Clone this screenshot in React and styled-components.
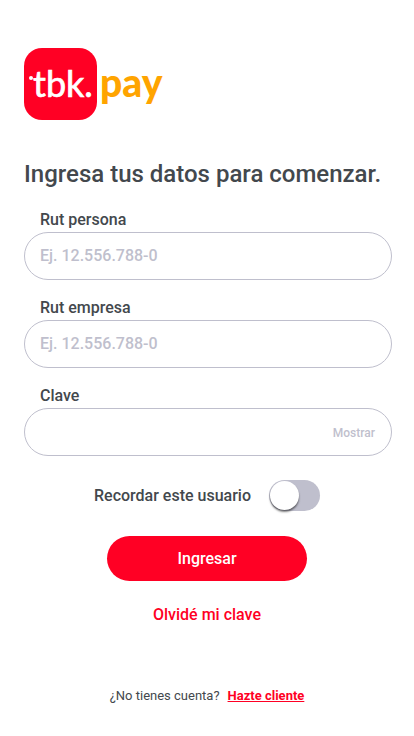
import React, { useState } from "react";
import styled, { createGlobalStyle } from "styled-components";

const App = () => {
	const [person, setPerson] = useState("");
	const [company, setCompany] = useState("");
	const [password, setPassword] = useState("");
	const [show, setShow] = useState(false);
	const [remember, setRemember] = useState(false);

	return (
		<>
			<GlobalStyle />
			<Container>
				<Logo />
				<Title>Ingresa tus datos para comenzar.</Title>
				<Form onSubmit={(e) => e.preventDefault()}>
					<Fields>
						<Field>
							<Label htmlFor='person'>Rut persona</Label>
							<InputBox>
								<Input
									id='person'
									placeholder='Ej. 12.556.788-0'
									value={person}
									onChange={(e) => setPerson(e.target.value)}
								/>
							</InputBox>
						</Field>
						<Field>
							<Label htmlFor='company'>Rut empresa</Label>
							<InputBox>
								<Input
									id='company'
									placeholder='Ej. 12.556.788-0'
									value={company}
									onChange={(e) => setCompany(e.target.value)}
								/>
							</InputBox>
						</Field>
						<Field>
							<Label htmlFor='password'>Clave</Label>
							<InputBox>
								<Input
									id='password'
									type={show ? "text" : "password"}
									value={password}
									onChange={(e) => setPassword(e.target.value)}
								/>
								<ShowButton type='button' onClick={() => setShow(!show)}>
									{show ? "Ocultar" : "Mostrar"}
								</ShowButton>
							</InputBox>
						</Field>
					</Fields>
					<Remember>
						<label htmlFor='remember'>Recordar este usuario</label>
						<Toggle
							id='remember'
							type='checkbox'
							checked={remember}
							onChange={(e) => setRemember(e.target.checked)}
						/>
					</Remember>
					<Submit type='submit'>Ingresar</Submit>
					<Forgot href='#clave'>Olvidé mi clave</Forgot>
				</Form>
				<Footer>
					<span>¿No tienes cuenta?</span>
					<SignUp href='#registro'>Hazte cliente</SignUp>
				</Footer>
			</Container>
		</>
	);
};

const Logo = () => (
	<LogoSvg viewBox='0 0 140 72' role='img' aria-label='tbk. pay'>
		<rect width='73' height='72' rx='18' fill='#ff0024' />
		<circle cx='7' cy='30' r='2' fill='#fff' />
		<LogoText
			x='9'
			y='49'
			fontSize='36'
			fontWeight='400'
			fill='#fff'
			stroke='#fff'
			strokeWidth='0.7'>
			tbk.
		</LogoText>
		<LogoText x='76' y='49' fontSize='39' fontWeight='900' fill='#ffa400'>
			pay
		</LogoText>
	</LogoSvg>
);

export default App;

const GlobalStyle = createGlobalStyle`
	* {
		box-sizing: border-box;
	}

	body {
		margin: 0;
		background-color: #fff;
		color: #43484d;
		font-family: Roboto, sans-serif;
		font-size: 16px;
		font-weight: 500;
		line-height: 24px;
	}

	input,
	button {
		font-family: inherit;
		font-weight: inherit;
	}
`;

const Container = styled.main`
	padding: 48px 0 24px;
	display: flex;
	flex-direction: column;
`;

const LogoSvg = styled.svg`
	width: 140px;
	height: 72px;
	margin-left: 24px;
	display: block;
`;

const LogoText = styled.text`
	font-family: Lato, sans-serif;
`;

const Title = styled.h1`
	margin: 40px 0 20px;
	padding: 0 22px 0 24px;
	font-size: 24px;
	font-weight: 500;
	line-height: 28px;
`;

const Form = styled.form`
	display: flex;
	flex-direction: column;
	align-items: center;
`;

const Fields = styled.div`
	width: 100%;
	padding: 0 22px 0 24px;
	display: flex;
	flex-direction: column;
	gap: 16px;
`;

const Field = styled.div`
	display: flex;
	flex-direction: column;
`;

const Label = styled.label`
	padding-left: 16px;
`;

const InputBox = styled.div`
	height: 48px;
	padding: 0 16px 0 15px;
	display: flex;
	align-items: center;
	border: 1px solid #bfbfcd;
	border-radius: 24px;

	&:focus-within {
		border-color: #43484d;
	}
`;

const Input = styled.input`
	flex: 1;
	min-width: 0;
	padding: 0 0 2px;
	border: 0;
	outline: none;
	background: none;
	color: inherit;
	font-size: 16px;

	&::placeholder {
		color: #bfbfcd;
		opacity: 1;
	}
`;

const ShowButton = styled.button`
	padding: 2px 0 0;
	border: 0;
	background: none;
	color: #bfbfcd;
	font-size: 12px;
	line-height: 16px;
	cursor: pointer;
`;

const Remember = styled.div`
	margin: 24px 0 25px;
	display: flex;
	align-items: center;
	gap: 18px;
	line-height: 22px;
`;

const Toggle = styled.input`
	appearance: none;
	width: 51px;
	height: 31px;
	margin: 0;
	padding: 1px;
	display: flex;
	border-radius: 16px;
	background-color: #bfbfcd;
	cursor: pointer;

	&::before {
		content: "";
		width: 29px;
		height: 29px;
		border-radius: 50%;
		background-color: #fff;
		box-shadow: 0 2px 2px rgba(0, 0, 0, 0.5);
		transition: transform 250ms;
	}

	&:checked {
		background-color: #ff0024;
	}

	&:checked::before {
		transform: translateX(20px);
	}
`;

const Submit = styled.button`
	width: 200px;
	height: 45px;
	border: 0;
	border-radius: 24px;
	background-color: #ff0024;
	color: #fff;
	font-size: 16px;
	cursor: pointer;
`;

const Forgot = styled.a`
	margin-top: 22px;
	color: #ff0024;
	text-decoration: none;
`;

const Footer = styled.footer`
	margin-top: 61px;
	display: flex;
	justify-content: center;
	gap: 8px;
	font-size: 13px;
	font-weight: 400;
	line-height: 16px;
`;

const SignUp = styled.a`
	color: #ff0024;
	font-weight: 700;
`;
